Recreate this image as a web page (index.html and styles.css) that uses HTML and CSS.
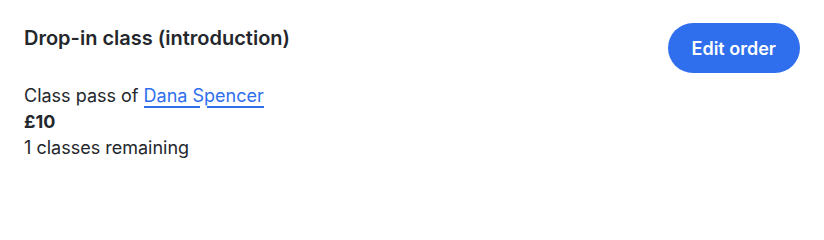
FILE: index.html
```html
<!DOCTYPE html>
<html>
<head>
<meta charset="utf-8">
<link rel="stylesheet" href="styles.css">
</head>
<body>
<div class="card">
  <div class="info">
    <h2 class="title">Drop-in class (introduction)</h2>
    <div class="details">
      <div class="line">Class pass of <a class="link" href="#"><span class="u u-first">Dana S</span><span class="u u-last">pencer</span></a></div>
      <div class="line price">£10</div>
      <div class="line">1 classes remaining</div>
    </div>
  </div>
  <button class="btn">Edit order</button>
</div>
</body>
</html>
```
FILE: styles.css
```css
html, body {
  margin: 0;
  padding: 0;
  background: #ffffff;
}
body {
  font-family: Inter, "Noto Sans", sans-serif;
  color: #24272c;
}
.card {
  display: flex;
  justify-content: space-between;
  align-items: flex-start;
  padding: 23px 24px 24px 24px;
}
.info {
  padding-top: 1px;
}
.title {
  margin: 0;
  font-size: 20px;
  font-weight: 600;
  line-height: 28px;
}
.details {
  margin-top: 31px;
  font-size: 18px;
  line-height: 26px;
}
.price {
  font-weight: 700;
}
.link {
  color: #2f6fed;
  text-decoration: none;
}
.u {
  padding-bottom: 2px;
  background-image: linear-gradient(#2f6fed, #2f6fed);
  background-repeat: no-repeat;
}
.u-first {
  background-position: left bottom;
  background-size: calc(100% - 4px) 2px;
}
.u-last {
  background-position: right bottom;
  background-size: calc(100% - 3px) 2px;
}
.btn {
  border: none;
  background: #2f6fed;
  color: #ffffff;
  font-family: Inter, "Noto Sans", sans-serif;
  font-size: 18px;
  font-weight: 600;
  height: 50px;
  padding: 0 24px;
  border-radius: 25px;
}
```
